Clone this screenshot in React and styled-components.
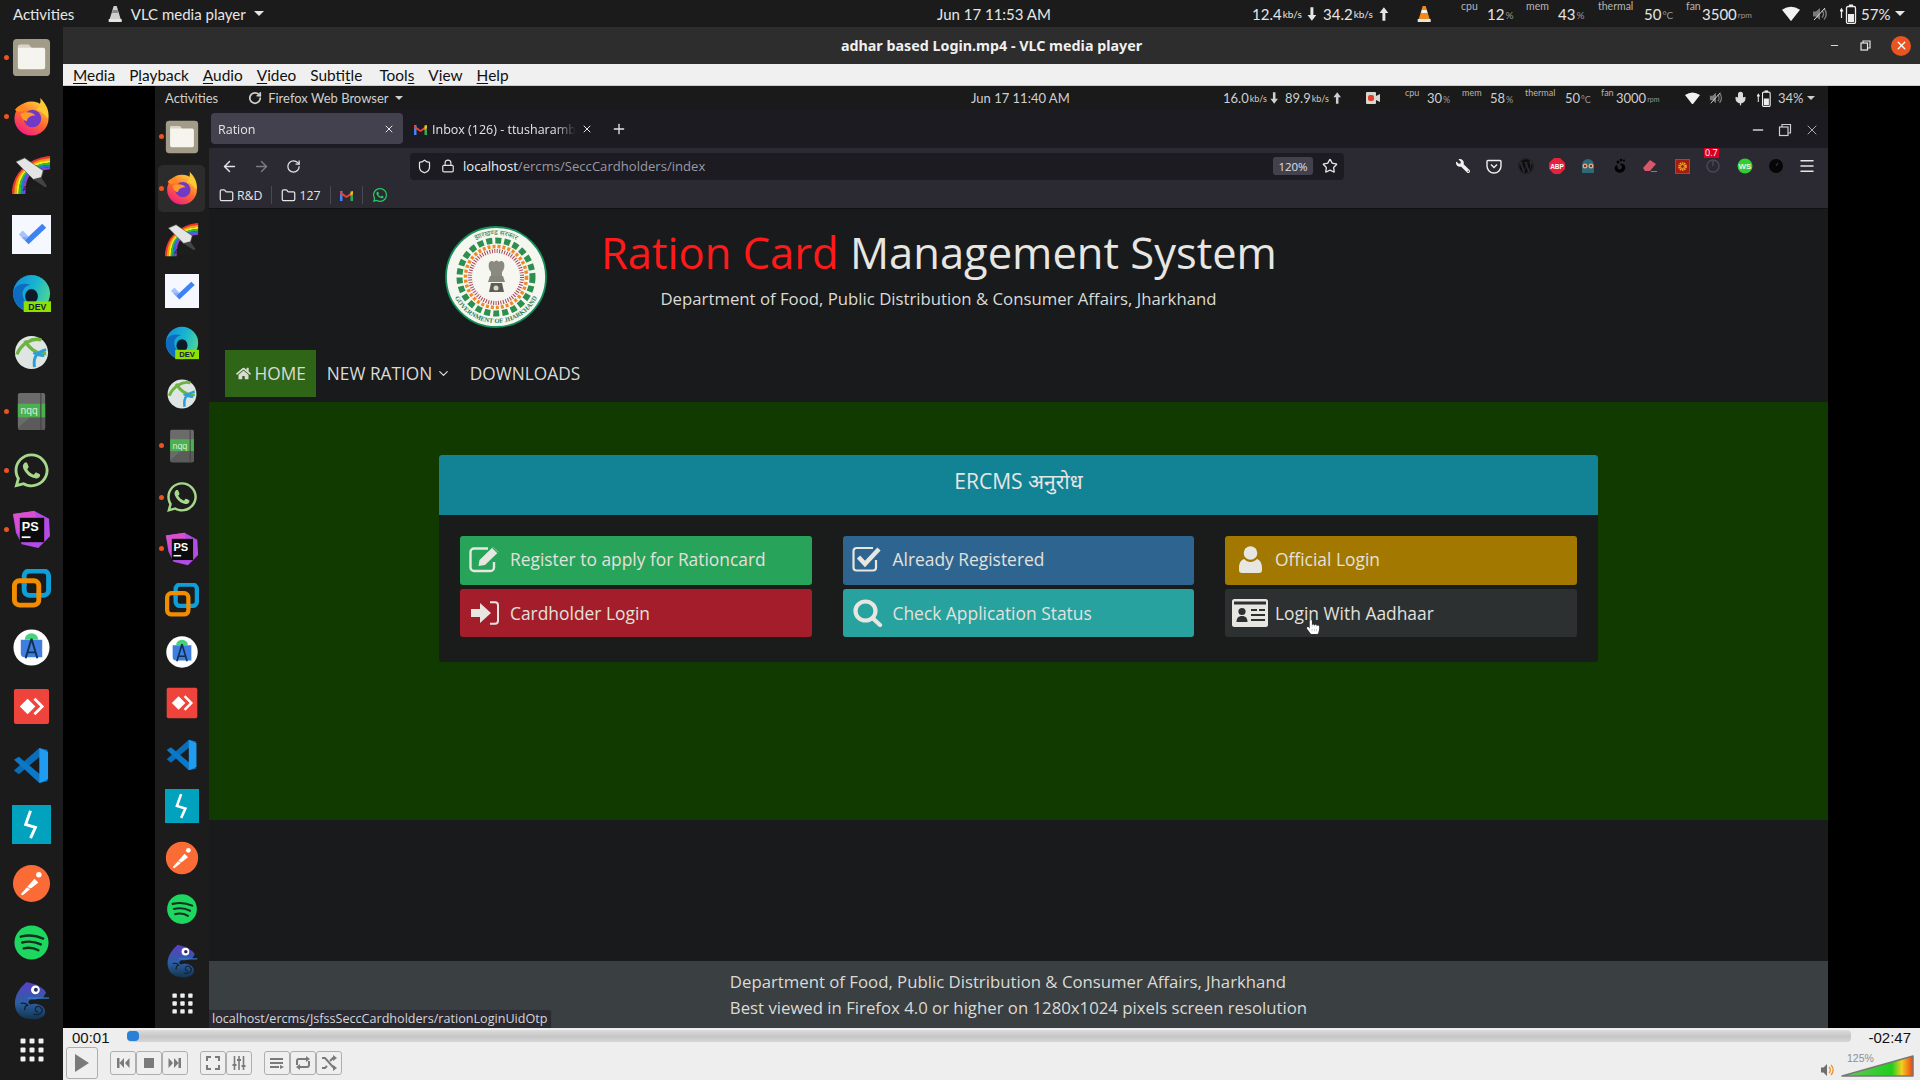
import React from "react";
import styled, { createGlobalStyle } from "styled-components";
import { X, Plus, ArrowLeft, ArrowRight, RotateCw, Star, Lock, Shield, Folder, Minus, Menu, ChevronDown, Mic } from "lucide-react";
import { FaWhatsapp, FaHome, FaWordpress, FaWrench, FaHandPointer } from "react-icons/fa";

const Global = createGlobalStyle`
  html, body { margin: 0; padding: 0; background: #000; }
  #root { width: 1920px; height: 1080px; overflow: hidden; }
  * { box-sizing: border-box; }
`;

const Desktop = styled.div`
  width: 1920px; height: 1080px; display: flex; flex-direction: column;
  background: #1b1b1b; font-family: "Open Sans", "Noto Sans", sans-serif;
`;

/* ---------- gnome top bars ---------- */
const TopBar = styled.div`
  flex: none; display: flex; align-items: center;
  height: ${p => p.$inner ? 24 : 27}px;
  background: ${p => p.$inner ? "#1a1a1b" : "#1b1b1b"};
  color: ${p => p.$inner ? "#cfcfcf" : "#e6e6e6"};
  font-family: Lato, "Noto Sans", sans-serif;
  font-size: ${p => p.$inner ? 13 : 15}px;
  white-space: nowrap;
`;
const BarLeft = styled.div`
  flex: none; display: flex; align-items: center; width: ${p => p.$w}px; padding-left: ${p => p.$pad}px;
`;
const BarApp = styled.span`
  display: inline-flex; align-items: center; gap: ${p => p.$gap || 6}px; margin-left: ${p => p.$ml}px;
`;
const Caret = styled.i`
  display: inline-block; flex: none; margin-left: ${p => p.$ml || 0}px;
  border-left: ${p => p.$s || 5}px solid transparent; border-right: ${p => p.$s || 5}px solid transparent;
  border-top: ${p => p.$s || 5}px solid currentColor;
`;
const BarClock = styled.span``;
const BarRight = styled.div`
  margin-left: auto; display: flex; align-items: center; height: 100%; padding-right: ${p => p.$pad}px;
`;
const Cell = styled.span`
  flex: none; display: flex; align-items: center; width: ${p => p.$w}px; height: 100%; position: relative;
`;
const Unit = styled.span`
  font-size: ${p => p.$s || 10}px; color: ${p => p.$c || "inherit"}; margin-left: 1px; padding-top: ${p => p.$t || 0}px;
`;
const MetricLabel = styled.span`
  flex: none; width: ${p => p.$w}px; font-size: ${p => p.$s}px; color: #b5b5b5; align-self: flex-start; padding-top: 1px; line-height: 11px;
`;

const Arrow = ({ up, size = 14 }) => (
  <svg width={size * 0.7} height={size} viewBox="0 0 10 14">
    <path d={up ? "M5 0L9.5 6H6.5V14H3.5V6H.5Z" : "M5 14L9.5 8H6.5V0H3.5V8H.5Z"} fill="currentColor" />
  </svg>
);
const Cone = ({ size = 18, grey }) => (
  <svg width={size * 0.8} height={size} viewBox="0 0 14 18">
    <path d="M5.5 1h3l4 13H1.5z" fill={grey ? "#cfcfcf" : "#f08a1d"} />
    <path d="M4.6 5h4.8l.8 3H3.8z" fill={grey ? "#8a8a8a" : "#f4f4f4"} />
    <path d="M.5 14h13v3H.5z" fill="#e9e4dc" />
  </svg>
);
const WifiGlyph = ({ size = 18 }) => (
  <svg width={size} height={size * 0.85} viewBox="0 0 18 15"><path d="M0 3.500Q9-2.500 18 3.500L9 15Z" fill="#f2f2f2" /></svg>
);
const SpeakerGlyph = ({ size = 16 }) => (
  <svg width={size} height={size} viewBox="0 0 16 16">
    <path d="M1 5.500h3L8 2v12L4 10.500H1z" fill="#7b7b7b" />
    <path d="M10 4.500a5 5 0 0 1 0 7M12 2.500a8 8 0 0 1 0 11" stroke="#7b7b7b" strokeWidth="1.500" fill="none" />
    <path d="M2 14L13 2" stroke="#ddd" strokeWidth="1" />
  </svg>
);
const BatteryGlyph = ({ h = 20 }) => (
  <svg width={h * 0.85} height={h} viewBox="0 0 17 20">
    <path d="M1.500 11V6M0 7.500L1.500 5 3 7.500M1.500 9v5" stroke="#eee" strokeWidth="1.200" fill="none" />
    <rect x="6.500" y="2.500" width="9" height="17" rx="1.500" fill="none" stroke="#eee" strokeWidth="1.300" />
    <rect x="9" y="0.500" width="4" height="2" fill="#eee" />
    <rect x="8" y="10" width="6" height="8" fill="#eee" />
  </svg>
);

const Metric = ({ w, lw, ls, label, value, unit, us }) => (
  <Cell $w={w}>
    <MetricLabel $w={lw} $s={ls}>{label}</MetricLabel>
    <span>{value}</span>
    <Unit $s={us} $c="#999" $t={2}>{unit}</Unit>
  </Cell>
);

/* ---------- docks ---------- */
const Body = styled.div`flex: 1; min-height: 0; display: flex;`;
const DockRail = styled.nav`
  flex: none; display: flex; flex-direction: column; align-items: center;
  width: ${p => p.$w}px; background: ${p => p.$bg}; padding-top: ${p => p.$top}px;
`;
const DockItem = styled.div`
  flex: none; position: relative; width: 100%; height: ${p => p.$h}px;
  display: flex; align-items: center; justify-content: center;
`;
const DockActive = styled.div`
  position: absolute; left: 3px; right: 4px; top: 2px; bottom: 2px; border-radius: 5px; background: #2c2c2c;
`;
const RunDot = styled.i`
  position: absolute; left: ${p => p.$l}px; top: 50%; width: 5px; height: 5px; margin-top: -2.5px;
  border-radius: 50%; background: #e95420;
`;
const DockGrid = styled.div`
  height: ${p => p.$h}px; display: flex; align-items: center; justify-content: center;
  flex: none; width: 100%;
`;
const IconBox = styled.span`position: relative; z-index: 1; display: flex;`;

const G = ({ s, children }) => <svg width={s} height={s} viewBox="0 0 40 40">{children}</svg>;
const FilesIcon = ({ s }) => (
  <G s={s}>
    <rect x="1" y="1" width="38" height="38" rx="4" fill="#a29b87" />
    <path d="M6 9a2 2 0 0 1 2-2h9l3 3h12a2 2 0 0 1 2 2v18a2 2 0 0 1-2 2H8a2 2 0 0 1-2-2z" fill="#f6f4ef" />
    <path d="M6 9a2 2 0 0 1 2-2h9l3 3H6z" fill="#d8d4c8" />
  </G>
);
const FirefoxIcon = ({ s }) => (
  <G s={s}>
    <defs>
      <linearGradient id="ffa" x1="0.800" y1="0" x2="0.200" y2="1"><stop offset="0" stopColor="#ffd33a" /><stop offset="0.500" stopColor="#ff6a2a" /><stop offset="1" stopColor="#f0148f" /></linearGradient>
    </defs>
    <circle cx="20" cy="22" r="17.500" fill="url(#ffa)" />
    <path d="M29 1c6 6 10 14 8 21-3-4-9-9-12-9 3-3 5-7 4-12z" fill="#ffc933" />
    <path d="M3 13c3-4 8-6 10-5-1 2 0 3 2 4-3 2-8 5-12 1z" fill="#ff8a20" />
    <circle cx="21" cy="22" r="9" fill="#7238c8" />
    <path d="M9 17c5-2 12-2 15 2-5 0-8 2-9 6-3-1-6-4-6-8z" fill="#ff9a24" />
  </G>
);
const AsbruIcon = ({ s }) => (
  <G s={s}>
    {["#e33", "#f90", "#ee2", "#3b3", "#27d", "#84c"].map((c, i) => (
      <path key={c} d={`M${i * 2.300 + 1} 39C${i * 2.300 + 1} 18 18 ${i * 2.300 + 3} 39 ${i * 2.300 + 1}`} stroke={c} strokeWidth="2.400" fill="none" />
    ))}
    <path d="M4 6l9-4 19 13-2 7-8 2z" fill="#e4e4e4" stroke="#555" strokeWidth="0.700" />
    <path d="M22 24l8-2 6 9-2 1z" fill="#444" />
    <text x="11" y="36" fontSize="8" fill="#222" fontFamily="Liberation Sans">Asbru</text>
  </G>
);
const TodoIcon = ({ s }) => (
  <G s={s}>
    <rect width="40" height="40" fill="#f6f8ff" />
    <path d="M7 20l4-4 6 6-4 4z" fill="#a6c4fb" />
    <path d="M13 26l-3-3 6-1 z" fill="#7fa8f8" />
    <path d="M13 26L31 9l4 4-18 17z" fill="#3f82f5" />
  </G>
);
const EdgeIcon = ({ s }) => (
  <G s={s}>
    <defs>
      <linearGradient id="eda" x1="0" y1="0.300" x2="1" y2="0.700"><stop offset="0" stopColor="#1392d8" /><stop offset="0.500" stopColor="#18b4d0" /><stop offset="1" stopColor="#52d98e" /></linearGradient>
    </defs>
    <circle cx="20" cy="20" r="19" fill="url(#eda)" />
    <path d="M1 20C2 11 11 8 19 11c-6 1-9 6-8 11 1 6 6 10 12 12-2 3-4 5-5 5C8 37 1 29 1 20z" fill="#0d6cc0" />
    <ellipse cx="20" cy="23" rx="6.500" ry="7.500" fill="#0c1a2a" />
    <rect x="12" y="28" width="28" height="11" fill="#8fe000" />
    <text x="26" y="37" fontSize="9" fontWeight="700" textAnchor="middle" fontFamily="Liberation Sans" fill="#123">DEV</text>
  </G>
);
const AnyConnectIcon = ({ s }) => (
  <G s={s}>
    <circle cx="20" cy="20" r="17" fill="#dfe5e3" />
    <path d="M5 22C9 12 20 4 30 7M13 8c4 6 10 14 22 13" stroke="#6cb33f" strokeWidth="3.500" fill="none" />
    <path d="M35 17c-6 2-14 4-12 18M22 20c3 2 6 4 11 3" stroke="#2b9fd8" strokeWidth="3" fill="none" />
  </G>
);
const NqqIcon = ({ s }) => (
  <G s={s}>
    <path d="M6 3a2 2 0 0 1 2-2h24a2 2 0 0 1 2 2v34a2 2 0 0 1-2 2H8a2 2 0 0 1-2-2z" fill="#6b6b6b" />
    <path d="M6 37L34 12v25a2 2 0 0 1-2 2H8z" fill="#5b5b5b" />
    <rect x="6" y="12" width="28" height="14" fill="#4caf50" />
    <rect x="29" y="1" width="1.200" height="38" fill="#444" />
    <text x="17.500" y="23" fontSize="10.500" textAnchor="middle" fontFamily="Liberation Sans" fill="#d7eed6">nqq</text>
  </G>
);
const PsIcon = ({ s }) => (
  <G s={s}>
    <path d="M1 4l22-3 15 8 1 18-12 12-17-4-6-12z" fill="#b34be6" />
    <path d="M1 4l22-3 3 12L6 24z" fill="#d94fd0" />
    <rect x="8" y="8" width="25" height="25" fill="#0b0b0b" />
    <text x="10" y="22" fontSize="13" fontWeight="700" fontFamily="Liberation Sans" fill="#fff">PS</text>
    <rect x="10" y="27" width="9" height="1.800" fill="#fff" />
  </G>
);
const VmwareIcon = ({ s }) => (
  <G s={s}>
    <rect x="12.500" y="2" width="25" height="25" rx="5" fill="none" stroke="#0f9fd8" strokeWidth="5" />
    <rect x="2.500" y="12" width="25" height="25" rx="5" fill="none" stroke="#f28c00" strokeWidth="5" />
    <path d="M12.500 14.500V17" stroke="#0f9fd8" strokeWidth="5" fill="none" />
  </G>
);
const AndroidIcon = ({ s }) => (
  <G s={s}>
    <circle cx="20" cy="20" r="18.500" fill="#fff" />
    <path d="M9 12h22v18H13a4 4 0 0 1-4-4z" fill="#3e7ee0" />
    <path d="M13 12a7 6.500 0 0 1 14 0z" fill="#47d07f" />
    <path d="M20 11L14 31M20 11l6 20M16 25h8" stroke="#123052" strokeWidth="2" fill="none" />
  </G>
);
const AnydeskIcon = ({ s }) => (
  <G s={s}>
    <rect x="2" y="2" width="36" height="36" rx="2" fill="#ef443b" />
    <path d="M16 12l8 8-8 8-8-8z" fill="#fff" />
    <path d="M24 11l9 9-9 9-2-2 7-7-7-7z" fill="#fff" />
  </G>
);
const VscodeIcon = ({ s }) => (
  <G s={s}>
    <path d="M28 2L2 25l5 4 30-25z" fill="#0a6db8" />
    <path d="M2 14l5-3 30 25-9 2z" fill="#0b78c8" />
    <path d="M28 2l9 4v28l-9 4z" fill="#1f9cf0" />
  </G>
);
const BoltIcon = ({ s }) => (
  <G s={s}>
    <rect width="40" height="40" fill="#00a2bd" />
    <path d="M19 6l-5 14 10 3-5 11" stroke="#fff" strokeWidth="3" fill="none" />
  </G>
);
const PostmanIcon = ({ s }) => (
  <G s={s}>
    <circle cx="20" cy="20" r="19" fill="#fb6b36" />
    <path d="M9 31l14-16 4 4-16 13z" fill="#fff" />
    <circle cx="27.500" cy="11" r="2.800" fill="#fff" />
    <path d="M15 24l7 2" stroke="#fb6b36" strokeWidth="0.800" />
  </G>
);
const SpotifyIcon = ({ s }) => (
  <G s={s}>
    <circle cx="20" cy="20" r="17.500" fill="#1ed760" />
    <path d="M9 14q12-3 23 2M10.500 20q10-2.500 19 2M12 26q8-2 15 2" stroke="#14301e" strokeWidth="2.500" fill="none" strokeLinecap="round" />
  </G>
);
const ChameleonIcon = ({ s }) => (
  <G s={s}>
    <defs>
      <linearGradient id="chm" x1="0.500" y1="0" x2="0.500" y2="1"><stop offset="0" stopColor="#5b3fc4" /><stop offset="0.550" stopColor="#2c5fa4" /><stop offset="1" stopColor="#12344c" /></linearGradient>
    </defs>
    <path d="M15 1l11 3 7 5 2 3-3 5-8 2h-5c-3 2-3 4 0 5 3-1 7-1 11 1 4 2 5 7 3 10-3 4-9 5-14 4-10 0-16-7-16-16C3 14 8 7 15 1z" fill="url(#chm)" />
    <path d="M16 17.500h22" stroke="#2d7fd0" strokeWidth="1.300" />
    <path d="M9 23c4-1 6 0 7 2-2 0-3 2-3 5" stroke="#1b1b1b" strokeWidth="1.300" fill="none" />
    <circle cx="24" cy="9" r="4.500" fill="#fff" />
    <circle cx="24.500" cy="9" r="2" fill="#203060" />
    <path d="M27 32a3 3 0 1 1 3-3M22 34c6 2 10-2 9-6" stroke="#13243c" strokeWidth="1.200" fill="none" />
  </G>
);
const WhatsIcon = ({ s }) => <FaWhatsapp size={s} color="#a6d88c" />;
const GridIcon = ({ s }) => (
  <svg width={s} height={s} viewBox="0 0 24 24">
    {[3, 12, 21].flatMap(y => [3, 12, 21].map(x => <rect key={`${x}${y}`} x={x - 2.500} y={y - 2.500} width="5" height="5" rx="1" fill="#f0f0f0" />))}
  </svg>
);

const dockApps = [
  [FilesIcon, 1], [FirefoxIcon, 1], [AsbruIcon, 0], [TodoIcon, 0], [EdgeIcon, 0], [AnyConnectIcon, 0],
  [NqqIcon, 1], [WhatsIcon, 1], [PsIcon, 1], [VmwareIcon, 0], [AndroidIcon, 0], [AnydeskIcon, 0],
  [VscodeIcon, 0], [BoltIcon, 0], [PostmanIcon, 0], [SpotifyIcon, 0], [ChameleonIcon, 0],
];

const Dock = ({ w, bg, top, step, icon, dot, active, gridH, gridS }) => (
  <DockRail $w={w} $bg={bg} $top={top}>
    {dockApps.map(([Ic, run], i) => (
      <DockItem key={i} $h={step}>
        {active === i && <DockActive />}
        {run ? <RunDot $l={dot} /> : null}
        <IconBox><Ic s={icon} /></IconBox>
      </DockItem>
    ))}
    <DockGrid $h={gridH}><GridIcon s={gridS} /></DockGrid>
  </DockRail>
);

/* ---------- VLC window ---------- */
const VlcWindow = styled.div`flex: 1; min-width: 0; display: flex; flex-direction: column;`;
const TitleBar = styled.div`
  flex: none; height: 37px; position: relative; display: flex; align-items: center; justify-content: center;
  background: #2d2d2d; color: #f0f0f0; font-family: "Noto Sans", sans-serif; font-weight: 700; font-size: 14.300px;
`;
const WindowButtons = styled.div`
  position: absolute; right: 9px; top: 0; bottom: 0; display: flex; align-items: center; gap: 20px; color: #e8e8e8;
`;
const CloseDot = styled.span`
  width: 20px; height: 20px; border-radius: 50%; background: #e95420; color: #fff;
  display: flex; align-items: center; justify-content: center;
`;
const MenuBar = styled.div`
  flex: none; height: 22px; display: flex; align-items: center; gap: 14px; padding-left: 10px;
  background: #f0f0f0; border-bottom: 1px solid #ccc; color: #111;
  font-family: Lato, "Noto Sans", sans-serif; font-size: 15.400px;
`;
const MenuEntry = styled.span`white-space: nowrap; margin-left: ${p => p.$ml || 0}px;`;
const Mnemonic = styled.span`text-decoration: underline; text-underline-offset: 2px;`;
const VideoArea = styled.div`flex: 1; min-height: 0; background: #000; padding: 0 92px; display: flex;`;
const InnerScreen = styled.div`flex: 1; min-width: 0; display: flex; flex-direction: column;`;

/* ---------- Firefox ---------- */
const Browser = styled.div`flex: 1; min-width: 0; display: flex; flex-direction: column; position: relative;`;
const TabStrip = styled.div`
  flex: none; height: 38px; background: #1c1b22; display: flex; align-items: flex-start; padding: 3px 0 0 2px;
  color: #e4e4e6; font-size: 12.500px; position: relative;
`;
const Tab = styled.div`
  flex: none; width: ${p => p.$w}px; height: 31px; border-radius: 4px; padding: 1px 8px 0 ${p => p.$pl}px;
  display: flex; align-items: center; gap: 5px; background: ${p => p.$on ? "#42414d" : "transparent"};
  white-space: nowrap; overflow: hidden;
`;
const TabTitle = styled.span`
  flex: 1; min-width: 0; overflow: hidden; -webkit-mask-image: linear-gradient(90deg, #000 85%, transparent);
  mask-image: linear-gradient(90deg, #000 85%, transparent);
`;
const NewTab = styled.span`margin: 8px 0 0 10px; display: flex;`;
const FfWindowControls = styled.div`
  margin-left: auto; height: 33px; display: flex; align-items: center; gap: 12px; padding-right: 8px; color: #cfcfd2;
`;
const Toolbar = styled.div`
  flex: none; height: 61px; background: #2b2a33; border-bottom: 1px solid #111; color: #e4e4e6;
  display: flex; flex-direction: column;
`;
const NavRow = styled.div`flex: none; height: 34px; padding: 2px 5px 0 4px; display: flex; align-items: center;`;
const NavBtn = styled.span`
  flex: none; width: 32px; display: flex; justify-content: center; color: ${p => p.$off ? "#7c7b82" : "#e4e4e6"};
`;
const UrlBar = styled.div`
  flex: none; width: 934px; height: 27px; margin-left: 101px; border-radius: 4px; background: #1c1b22;
  display: flex; align-items: center; padding: 0 4px 0 7px; font-size: 13.100px;
`;
const UrlShield = styled.span`display: flex; margin-right: 9px;`;
const UrlHost = styled.span`color: #f0f0f2; margin-left: 8px;`;
const UrlPath = styled.span`color: #9a99a2;`;
const ZoomPill = styled.span`
  margin-left: auto; width: 40px; height: 18px; border-radius: 3px; background: #42414d; color: #e0e0e2;
  font-size: 11.500px; display: flex; align-items: center; justify-content: center;
`;
const UrlStar = styled.span`display: flex; margin: 0 2px 0 9px;`;
const ExtRow = styled.div`margin-left: auto; display: flex; align-items: center;`;
const ExtCell = styled.span`
  flex: none; width: 31.300px; display: flex; align-items: center; justify-content: center; position: relative;
`;
const ExtBadge = styled.span`
  position: absolute; left: 6px; top: -11px; width: 15px; height: 9.500px; background: #d70022; color: #fff;
  font-size: 9px; line-height: 10px; text-align: center;
`;
const BookmarkRow = styled.div`flex: 1; display: flex; align-items: center; padding-left: 10px; font-size: 12.300px;`;
const Bookmark = styled.span`display: inline-flex; align-items: center; gap: 3px; color: #e4e4e6;`;
const BmSep = styled.span`width: 1px; height: 18px; background: #4a4953; margin: 0 9px;`;

/* ---------- page ---------- */
const Page = styled.main`
  flex: 1; min-height: 0; background: #181a1b; display: flex; flex-direction: column; color: #dcdad6;
`;
const PageHeader = styled.header`flex: none; height: 141px; display: flex; padding: 17px 0 0 236px;`;
const SealBox = styled.div`flex: none; width: 102px; height: 102px;`;
const TitleBlock = styled.div`flex: none; width: 675px; margin-left: 54px; text-align: center; padding-top: 1px;`;
const SiteTitle = styled.h1`
  margin: 0; font-weight: 400; font-size: 43.500px; line-height: 52px; color: #e8e6e3; white-space: nowrap;
`;
const Red = styled.span`color: #fe1a1a;`;
const SiteSub = styled.p`margin: 7px 0 0; font-size: 16.750px; line-height: 26px; color: #dcdad6; white-space: nowrap;`;
const NavStrip = styled.nav`flex: none; height: 52px; display: flex; padding-left: 16px; font-size: 17.300px; color: #dcdad6;`;
const NavLink = styled.a`
  height: 47px; display: flex; align-items: center; gap: 4px; padding: 0 ${p => p.$pr ?? 10.5}px 0 10.500px;
  background: ${p => p.$on ? "#2e6516" : "transparent"};
`;
const Band = styled.section`flex: none; height: 418px; background: #103a00; padding: 53px 0 0 230px;`;
const Panel = styled.div`width: 1159px; height: 207px; border-radius: 3px; background: #1a1c1c; overflow: hidden;`;
const PanelHead = styled.div`
  height: 60px; background: #118395; color: #e8e6e3; font-size: 21px; display: flex; align-items: center; justify-content: center;
  padding-bottom: 8px;
`;
const ButtonGrid = styled.div`
  display: grid; grid-template-columns: repeat(3, 351.500px); grid-auto-rows: 48.500px; column-gap: 31px; row-gap: 4px;
  padding: 21px 0 0 21px;
`;
const ActionButton = styled.a`
  position: relative; display: flex; align-items: center; border-radius: 3px; background: ${p => p.$bg};
  color: #e3e1dc; font-size: 17.400px; white-space: nowrap;
  padding-bottom: ${p => p.$low ? 0 : 2}px; padding-top: ${p => p.$low ? 1 : 0}px;
`;
const ActionIcon = styled.span`flex: none; width: 50px; display: flex; justify-content: center;`;
const HandCursor = styled.span`position: absolute; left: 81px; top: 31px; display: flex; color: #fff;`;
const PageSpacer = styled.div`flex: 1;`;
const PageFooter = styled.footer`
  flex: none; height: 67px; background: #3a3f42; display: flex; justify-content: center; padding-top: 8px;
  font-size: 16.750px; line-height: 25.600px; color: #dcdad6;
`;
const FooterText = styled.div`text-align: left;`;
const StatusTip = styled.div`
  position: absolute; left: 0; bottom: 0; height: 19px; width: 343px; padding-left: 3px; background: #2b2a33; color: #d6d6d8;
  border-top-right-radius: 4px; border: 1px solid #3c3b44; border-left: 0; border-bottom: 0; font-size: 12.600px; line-height: 18px; white-space: nowrap;
`;

/* ---------- VLC controls ---------- */
const Controls = styled.div`
  flex: none; height: 52px; background: #eeeeee; position: relative; display: flex; flex-direction: column;
`;
const SeekRow = styled.div`flex: none; height: 19px; display: flex; align-items: center; padding-left: 9px; font-family: "Liberation Sans", sans-serif; font-size: 15px; color: #111;`;
const TimeText = styled.span`flex: none; width: ${p => p.$w}px; text-align: ${p => p.$right ? "right" : "left"}; padding-right: ${p => p.$right ? 9 : 0}px;`;
const SeekTrack = styled.div`
  flex: 1; height: 12px; margin-top: -3px; border-radius: 4px; background: linear-gradient(#dcdcdc, #c6c6c6 55%, #d6d6d6); position: relative;
`;
const SeekFill = styled.div`position: absolute; left: 0; top: 1px; height: 10px; width: ${p => p.$w}px; border-radius: 4px; background: #2a7fd6;`;
const ButtonRow = styled.div`flex: 1; display: flex; align-items: flex-start; padding-left: 3px;`;
const CtlBtn = styled.span`
  flex: none; width: ${p => p.$w || 26}px; height: ${p => p.$h || 24}px; margin-left: ${p => p.$ml || 0}px; margin-top: ${p => p.$mt ?? 4}px;
  border: 1px solid #aeaeae; border-radius: 3px; background: #efefef; display: flex; align-items: center; justify-content: center;
`;
const VolumeBox = styled.div`margin-left: auto; display: flex; align-items: flex-end; padding: 8px 6px 0 0; gap: 6px; position: relative;`;
const VolumeText = styled.span`
  position: absolute; left: 26px; top: 5px; font-size: 10.500px; color: #8f8f8f; font-family: "Liberation Sans", sans-serif;
`;

const Gl = ({ w = 16, h = 16, children }) => <svg width={w} height={h} viewBox={`0 0 ${w} ${h}`} fill="#7a7a7a">{children}</svg>;

/* ---------- page pictures ---------- */
const Seal = () => (
  <svg width="102" height="102" viewBox="0 0 102 102">
    <defs>
      <path id="sealTop" d="M9 51a42 42 0 0 1 84 0" />
      <path id="sealBot" d="M5 51a46 46 0 0 0 92 0" />
    </defs>
    <circle cx="51" cy="51" r="50" fill="#f6f6f0" stroke="#16905a" strokeWidth="1.800" />
    <text fontSize="7" fill="#2a7a4a" fontFamily="Noto Sans, sans-serif"><textPath href="#sealTop" startOffset="50%" textAnchor="middle">झारखण्ड सरकार</textPath></text>
    <text fontSize="6.500" fontWeight="700" fill="#2a7a4a" fontFamily="Liberation Serif, serif"><textPath href="#sealBot" startOffset="50%" textAnchor="middle">GOVERNMENT OF JHARKHAND</textPath></text>
    <circle cx="51" cy="51" r="36.500" fill="none" stroke="#2d8f4d" strokeWidth="6" strokeDasharray="6 3" />
    <circle cx="51" cy="51" r="30.500" fill="none" stroke="#ef8a28" strokeWidth="3.500" strokeDasharray="3 2" />
    <circle cx="51" cy="51" r="26" fill="none" stroke="#a84458" strokeWidth="4" strokeDasharray="1 1.500" />
    <circle cx="51" cy="51" r="22.500" fill="#f7f7f2" />
    <path d="M44 37c2-3 4-2 5-1 2-2 3-2 5 0 1-1 3-2 5 1 1 3 0 7-2 9v5H46v-5c-2-2-3-6-2-9z" fill="#8a8a80" />
    <path d="M45 50h13l2 6H43z" fill="#85857c" />
    <path d="M46 57h11l2 9H44z" fill="#5e5e56" />
    <circle cx="51" cy="62" r="2.500" fill="#d8d8cc" />
  </svg>
);

const EditGlyph = () => (
  <svg width="32" height="28" viewBox="0 0 32 28" fill="none" stroke="#e8e6e0">
    <path d="M25 17v5.500a3.500 3.500 0 0 1-3.500 3.500H5a3.500 3.500 0 0 1-3.500-3.500V7A3.500 3.500 0 0 1 5 3.500h14" strokeWidth="2.400" />
    <path d="M9.500 21l1-6L24 2l5.500 5L16 20z" fill="#e8e6e0" stroke="none" />
    <path d="M23.500 2.500L29 8" stroke="#27a35a" strokeWidth="1.200" />
  </svg>
);
const CheckGlyph = () => (
  <svg width="31" height="26" viewBox="0 0 31 26" fill="none" stroke="#e8e6e0">
    <path d="M24 14v7.500a3 3 0 0 1-3 3H4.500a3 3 0 0 1-3-3V5a3 3 0 0 1 3-3H21" strokeWidth="2.200" />
    <path d="M6.500 11l6.500 7L27 3" strokeWidth="4.500" />
  </svg>
);
const SignInGlyph = () => (
  <svg width="28" height="24" viewBox="0 0 28 24" fill="#e8e6e0">
    <path d="M0 8h9V2l11 10L9 22v-6H0z" />
    <path d="M19 1.200h5a3 3 0 0 1 3 3v15.600a3 3 0 0 1-3 3h-5" fill="none" stroke="#e8e6e0" strokeWidth="2" />
  </svg>
);
const SearchGlyph = () => (
  <svg width="30" height="28" viewBox="0 0 30 28" fill="none" stroke="#e8e6e0" strokeWidth="4.200" strokeLinecap="round">
    <ellipse cx="12.500" cy="12" rx="10" ry="9.500" />
    <path d="M20 19.500l7 6.500" />
  </svg>
);
const UserGlyph = () => (
  <svg width="23" height="27" viewBox="0 0 23 27" fill="#e8e6e0">
    <ellipse cx="11.500" cy="7" rx="6.800" ry="6.800" />
    <path d="M5 13c2 2 4 3 6.500 3S16 15 18 13c3 1 5 4 5 9v2a3 3 0 0 1-3 3H3a3 3 0 0 1-3-3v-2c0-5 2-8 5-9z" />
  </svg>
);
const IdGlyph = () => (
  <svg width="36" height="28" viewBox="0 0 36 28">
    <rect width="36" height="28" rx="2.500" fill="#e8e6e0" />
    <rect x="2" y="2.500" width="32" height="3" fill="#2d3031" />
    <circle cx="10" cy="12.500" r="3.600" fill="#2d3031" />
    <path d="M4.500 23c0-4 2-6 5.500-6s5.500 2 5.500 6z" fill="#2d3031" />
    <path d="M19 11h6M27 11h6M19 16h14M19 21h14" stroke="#2d3031" strokeWidth="2.200" />
  </svg>
);
const GmailGlyph = ({ s = 13 }) => (
  <svg width={s} height={s} viewBox="0 0 13 13">
    <path d="M0 2h2.500v10H0z" fill="#4285f4" /><path d="M10.500 2H13v10h-2.500z" fill="#34a853" />
    <path d="M0 2l6.500 5L13 2v3L6.500 9 0 5z" fill="#ea4335" /><path d="M10.500 3.500L13 2v3l-2.500 2z" fill="#fbbc04" />
  </svg>
);
const WrenchGlyph = styled(FaWrench)`transform: scaleX(-1);`;

const exts = [
  <WrenchGlyph size={14} color="#f0f0f0" />,
  <svg width="16" height="16" viewBox="0 0 16 16" fill="none" stroke="#eee" strokeWidth="1.400"><path d="M2 2.500h12a1 1 0 0 1 1 1V8a7 7 0 0 1-14 0V3.500a1 1 0 0 1 1-1z" /><path d="M5 6.500l3 3 3-3" /></svg>,
  <FaWordpress size={16} color="#0d0d0d" />,
  <svg width="16" height="16" viewBox="0 0 16 16"><path d="M5 0h6l5 5v6l-5 5H5l-5-5V5z" fill="#e8203e" /><text x="8" y="10.500" fontSize="6.500" fontWeight="700" fill="#fff" textAnchor="middle" fontFamily="Liberation Sans">ABP</text></svg>,
  <svg width="16" height="18" viewBox="0 0 16 18"><path d="M2 8a6 6 0 0 1 12 0v8H2z" fill="#2c6a7a" /><circle cx="5" cy="9" r="2.500" fill="#e9a27a" /><circle cx="11" cy="9" r="2.500" fill="#e9a27a" /><circle cx="5" cy="9" r="1" fill="#222" /><circle cx="11" cy="9" r="1" fill="#222" /></svg>,
  <svg width="14" height="16" viewBox="0 0 14 16" fill="#000"><path d="M7 6c4-1 6 2 5 5s-5 5-8 3-3-6 0-7l1 4c2 1 4 0 4-2s-2-2-2-3z" /><circle cx="5" cy="4" r="1.500" /><circle cx="8" cy="2" r="1.300" /><circle cx="11" cy="2.500" r="1.100" /></svg>,
  <svg width="17" height="14" viewBox="0 0 17 14"><path d="M1 9l7-8 6 4-6 7H3z" fill="#d9576a" /><path d="M9 12h6v1H9z" fill="#d9576a" /></svg>,
  <svg width="15" height="15" viewBox="0 0 15 15"><rect width="15" height="15" fill="#7a5a3a" /><rect x="1" y="1" width="13" height="13" fill="#a51d10" /><circle cx="7.500" cy="7.500" r="3.500" fill="none" stroke="#f0b428" strokeWidth="1.600" strokeDasharray="1.500 .7" /><circle cx="7.500" cy="7.500" r="2" fill="none" stroke="#f0b428" /></svg>,
  <><svg width="14" height="14" viewBox="0 0 14 14" fill="none" stroke="#4a4953" strokeWidth="1.500"><circle cx="7" cy="7" r="6" /><path d="M7 2v5" /></svg><ExtBadge>0.7</ExtBadge></>,
  <svg width="16" height="16" viewBox="0 0 16 16"><circle cx="8" cy="8" r="7.500" fill="#2fd02f" /><text x="8" y="11" fontSize="8" fontWeight="700" fill="#eee" textAnchor="middle" fontFamily="Liberation Sans">WS</text></svg>,
  <svg width="16" height="16" viewBox="0 0 16 16"><circle cx="8" cy="8" r="7" fill="#060606" /><path d="M8 8l2-3" stroke="#444" /></svg>,
  <Menu size={18} color="#e6e6e6" />,
];

export default function App() {
  return (
    <Desktop>
      <Global />
      <TopBar>
        <BarLeft $w={937} $pad={13}>
          Activities
          <BarApp $ml={34} $gap={8}><Cone size={18} grey />VLC media player<Caret /></BarApp>
        </BarLeft>
        <BarClock>Jun 17  11:53 AM</BarClock>
        <BarRight $pad={15}>
          <Cell $w={55}>12.4<Unit $s={10}>kb/s</Unit></Cell>
          <Cell $w={16}><Arrow /></Cell>
          <Cell $w={56}>34.2<Unit $s={10}>kb/s</Unit></Cell>
          <Cell $w={38}><Arrow up /></Cell>
          <Cell $w={44}><Cone size={18} /></Cell>
          <Metric w={65} lw={26} ls={10.500} label="cpu" value="12" unit="%" us={10} />
          <Metric w={72} lw={32} ls={10.500} label="mem" value="43" unit="%" us={10} />
          <Metric w={88} lw={46} ls={10.500} label="thermal" value="50" unit="°C" us={10} />
          <Metric w={96} lw={16} ls={10.500} label="fan" value="3500" unit="rpm" us={8} />
          <Cell $w={30}><WifiGlyph /></Cell>
          <Cell $w={28}><SpeakerGlyph /></Cell>
          <Cell $w={21}><BatteryGlyph /></Cell>
          <Cell $w={34}>57%</Cell>
          <Caret />
        </BarRight>
      </TopBar>
      <Body>
        <Dock w={63} bg="#1b1b1b" top={1.500} step={58.950} icon={39} dot={4} gridH={39} gridS={24} />
        <VlcWindow>
          <TitleBar>
            adhar based Login.mp4 - VLC media player
            <WindowButtons>
              <Minus size={11} />
              <svg width="11" height="11" viewBox="0 0 11 11" fill="none" stroke="#e8e8e8" strokeWidth="1.200"><rect x="1" y="3" width="6.500" height="7" /><path d="M3 3V1h7v7H7.500" /></svg>
              <CloseDot><X size={13} strokeWidth={2.500} /></CloseDot>
            </WindowButtons>
          </TitleBar>
          <MenuBar>
            <MenuEntry><Mnemonic>M</Mnemonic>edia</MenuEntry>
            <MenuEntry>P<Mnemonic>l</Mnemonic>ayback</MenuEntry>
            <MenuEntry><Mnemonic>A</Mnemonic>udio</MenuEntry>
            <MenuEntry><Mnemonic>V</Mnemonic>ideo</MenuEntry>
            <MenuEntry>Subti<Mnemonic>t</Mnemonic>le</MenuEntry>
            <MenuEntry $ml={3}>Tool<Mnemonic>s</Mnemonic></MenuEntry>
            <MenuEntry>V<Mnemonic>i</Mnemonic>ew</MenuEntry>
            <MenuEntry><Mnemonic>H</Mnemonic>elp</MenuEntry>
          </MenuBar>
          <VideoArea>
            <InnerScreen>
              <TopBar $inner>
                <BarLeft $w={816} $pad={10}>
                  Activities
                  <BarApp $ml={30}><RotateCw size={14} strokeWidth={3} />Firefox Web Browser<Caret $s={4} /></BarApp>
                </BarLeft>
                <BarClock>Jun 17  11:40 AM</BarClock>
                <BarRight $pad={13}>
                  <Cell $w={47}>16.0<Unit $s={9}>kb/s</Unit></Cell>
                  <Cell $w={15}><Arrow size={12} /></Cell>
                  <Cell $w={48}>89.9<Unit $s={9}>kb/s</Unit></Cell>
                  <Cell $w={33}><Arrow up size={12} /></Cell>
                  <Cell $w={39}><svg width="14" height="12" viewBox="0 0 14 12"><rect width="10" height="12" rx="1" fill="#d8d8d0" /><rect x="2" y="3" width="6" height="6" rx="2" fill="#e0402a" /><path d="M10 4l4-2v8l-4-2z" fill="#d8d8d0" /></svg></Cell>
                  <Metric w={57} lw={22} ls={9} label="cpu" value="30" unit="%" us={9} />
                  <Metric w={63} lw={28} ls={9} label="mem" value="58" unit="%" us={9} />
                  <Metric w={76} lw={40} ls={9} label="thermal" value="50" unit="°C" us={9} />
                  <Metric w={84} lw={15} ls={9} label="fan" value="3000" unit="rpm" us={7} />
                  <Cell $w={24}><WifiGlyph size={15} /></Cell>
                  <Cell $w={24}><SpeakerGlyph size={14} /></Cell>
                  <Cell $w={24}><Mic size={15} color="#ddd" fill="#ddd" /></Cell>
                  <Cell $w={21}><BatteryGlyph h={17} /></Cell>
                  <Cell $w={29}>34%</Cell>
                  <Caret $s={4} />
                </BarRight>
              </TopBar>
              <Body>
                <Dock w={54} bg="#1c1c1c" top={1} step={51.500} icon={34} dot={4} active={1} gridH={33} gridS={21} />
                <Browser>
                  <TabStrip>
                    <Tab $w={192} $on $pl={7}><TabTitle>Ration</TabTitle><X size={12} /></Tab>
                    <Tab $w={198} $pl={11}><GmailGlyph /><TabTitle>Inbox (126) - ttusharambe</TabTitle><X size={12} /></Tab>
                    <NewTab><Plus size={16} /></NewTab>
                    <FfWindowControls>
                      <Minus size={16} /><svg width="14" height="14" viewBox="0 0 14 14" fill="none" stroke="#cfcfd2" strokeWidth="1.200"><rect x="1.500" y="4" width="8.500" height="8.500" /><path d="M4 4V1.500h8.500V10H10" /></svg><X size={16} strokeWidth={1.200} />
                    </FfWindowControls>
                  </TabStrip>
                  <Toolbar>
                    <NavRow>
                      <NavBtn><ArrowLeft size={17} /></NavBtn>
                      <NavBtn $off><ArrowRight size={17} /></NavBtn>
                      <NavBtn><RotateCw size={15} /></NavBtn>
                      <UrlBar>
                        <UrlShield><Shield size={15} /></UrlShield>
                        <Lock size={14} />
                        <UrlHost>localhost</UrlHost><UrlPath>/ercms/SeccCardholders/index</UrlPath>
                        <ZoomPill>120%</ZoomPill>
                        <UrlStar><Star size={16} /></UrlStar>
                      </UrlBar>
                      <ExtRow>{exts.map((e, i) => <ExtCell key={i}>{e}</ExtCell>)}</ExtRow>
                    </NavRow>
                    <BookmarkRow>
                      <Bookmark><Folder size={15} />R&amp;D</Bookmark><BmSep />
                      <Bookmark><Folder size={15} />127</Bookmark><BmSep />
                      <GmailGlyph /><BmSep />
                      <FaWhatsapp size={16} color="#25d366" />
                    </BookmarkRow>
                  </Toolbar>
                  <Page>
                    <PageHeader>
                      <SealBox><Seal /></SealBox>
                      <TitleBlock>
                        <SiteTitle><Red>Ration Card</Red> Management System</SiteTitle>
                        <SiteSub>Department of Food, Public Distribution &amp; Consumer Affairs, Jharkhand</SiteSub>
                      </TitleBlock>
                    </PageHeader>
                    <NavStrip>
                      <NavLink $on><FaHome size={15} />HOME</NavLink>
                      <NavLink $pr={8}>NEW RATION<ChevronDown size={15} /></NavLink>
                      <NavLink>DOWNLOADS</NavLink>
                    </NavStrip>
                    <Band>
                      <Panel>
                        <PanelHead>ERCMS अनुरोध</PanelHead>
                        <ButtonGrid>
                          <ActionButton $bg="#27a35a"><ActionIcon><EditGlyph /></ActionIcon>Register to apply for Rationcard</ActionButton>
                          <ActionButton $bg="#2e6590"><ActionIcon><CheckGlyph /></ActionIcon>Already Registered</ActionButton>
                          <ActionButton $bg="#a37800"><ActionIcon><UserGlyph /></ActionIcon>Official Login</ActionButton>
                          <ActionButton $low $bg="#a31e2a"><ActionIcon><SignInGlyph /></ActionIcon>Cardholder Login</ActionButton>
                          <ActionButton $low $bg="#27a29e"><ActionIcon><SearchGlyph /></ActionIcon>Check Application Status</ActionButton>
                          <ActionButton $low $bg="#2d3031"><ActionIcon><IdGlyph /></ActionIcon>Login With Aadhaar<HandCursor><FaHandPointer size={14} /></HandCursor></ActionButton>
                        </ButtonGrid>
                      </Panel>
                    </Band>
                    <PageSpacer />
                    <PageFooter>
                      <FooterText>
                        Department of Food, Public Distribution &amp; Consumer Affairs, Jharkhand<br />
                        Best viewed in Firefox 4.0 or higher on 1280x1024 pixels screen resolution
                      </FooterText>
                    </PageFooter>
                  </Page>
                  <StatusTip>localhost/ercms/JsfssSeccCardholders/rationLoginUidOtp</StatusTip>
                </Browser>
              </Body>
            </InnerScreen>
          </VideoArea>
          <Controls>
            <SeekRow>
              <TimeText $w={54.500}>00:01</TimeText>
              <SeekTrack><SeekFill $w={12} /></SeekTrack>
              <TimeText $w={69} $right>-02:47</TimeText>
            </SeekRow>
            <ButtonRow>
              <CtlBtn $w={32} $h={32} $mt={0}><Gl w={16} h={20}><path d="M1 1l14 9-14 9z" /></Gl></CtlBtn>
              <CtlBtn $ml={12}><Gl><path d="M2 3h2.500v10H2zM9 3v10L4.500 8zM14.500 3v10L10 8z" /></Gl></CtlBtn>
              <CtlBtn><Gl><path d="M3 3h10v10H3z" /></Gl></CtlBtn>
              <CtlBtn><Gl><path d="M1.500 3v10L6 8zM7 3v10l4.500-5zM11.500 3H14v10h-2.500z" /></Gl></CtlBtn>
              <CtlBtn $ml={12}><Gl><path d="M2 6V2h4M10 2h4v4M14 10v4h-4M6 14H2v-4" fill="none" stroke="#7a7a7a" strokeWidth="2" /></Gl></CtlBtn>
              <CtlBtn><Gl><path d="M3.500 1v14M8 1v14M12.500 1v14" stroke="#7a7a7a" strokeWidth="1.600" /><path d="M1.500 9h4v2h-4zM6 4h4v2H6zM10.500 10h4v2h-4z" /></Gl></CtlBtn>
              <CtlBtn $ml={12}><Gl><path d="M1 3h13v2H1zM1 7h13v2H1zM1 11h9v2H1zM11 10l4 2-4 2z" /></Gl></CtlBtn>
              <CtlBtn><Gl><path d="M2 10V6a2 2 0 0 1 2-2h8M14 6v4a2 2 0 0 1-2 2H4" fill="none" stroke="#7a7a7a" strokeWidth="2" /><path d="M11 1l4 3-4 3zM5 9l-4 3 4 3z" /></Gl></CtlBtn>
              <CtlBtn><Gl><path d="M1 3h3l8 9h2M1 13h3l2-2M9 6l3-3h2" fill="none" stroke="#7a7a7a" strokeWidth="2" /><path d="M12 0l4 3-4 3zM12 10l4 3-4 3z" /></Gl></CtlBtn>
              <VolumeBox>
                <svg width="14" height="14" viewBox="0 0 14 14"><path d="M0 4.500h2.500L6 1v12L2.500 9.500H0z" fill="#6e6e6e" /><path d="M8 4a4 4 0 0 1 0 6M10 2a7 7 0 0 1 0 10" stroke="#f09020" strokeWidth="1.300" fill="none" /></svg>
                <svg width="73" height="22" viewBox="0 0 73 22">
                  <defs><linearGradient id="vol"><stop offset="0" stopColor="#6cc860" /><stop offset="0.700" stopColor="#1ece1e" /><stop offset="0.840" stopColor="#f0d020" /><stop offset="1" stopColor="#f04010" /></linearGradient></defs>
                  <path d="M1 21L72 1v20z" fill="url(#vol)" stroke="#777" strokeWidth="1.500" strokeLinejoin="round" />
                </svg>
                <VolumeText>125%</VolumeText>
              </VolumeBox>
            </ButtonRow>
          </Controls>
        </VlcWindow>
      </Body>
    </Desktop>
  );
}
